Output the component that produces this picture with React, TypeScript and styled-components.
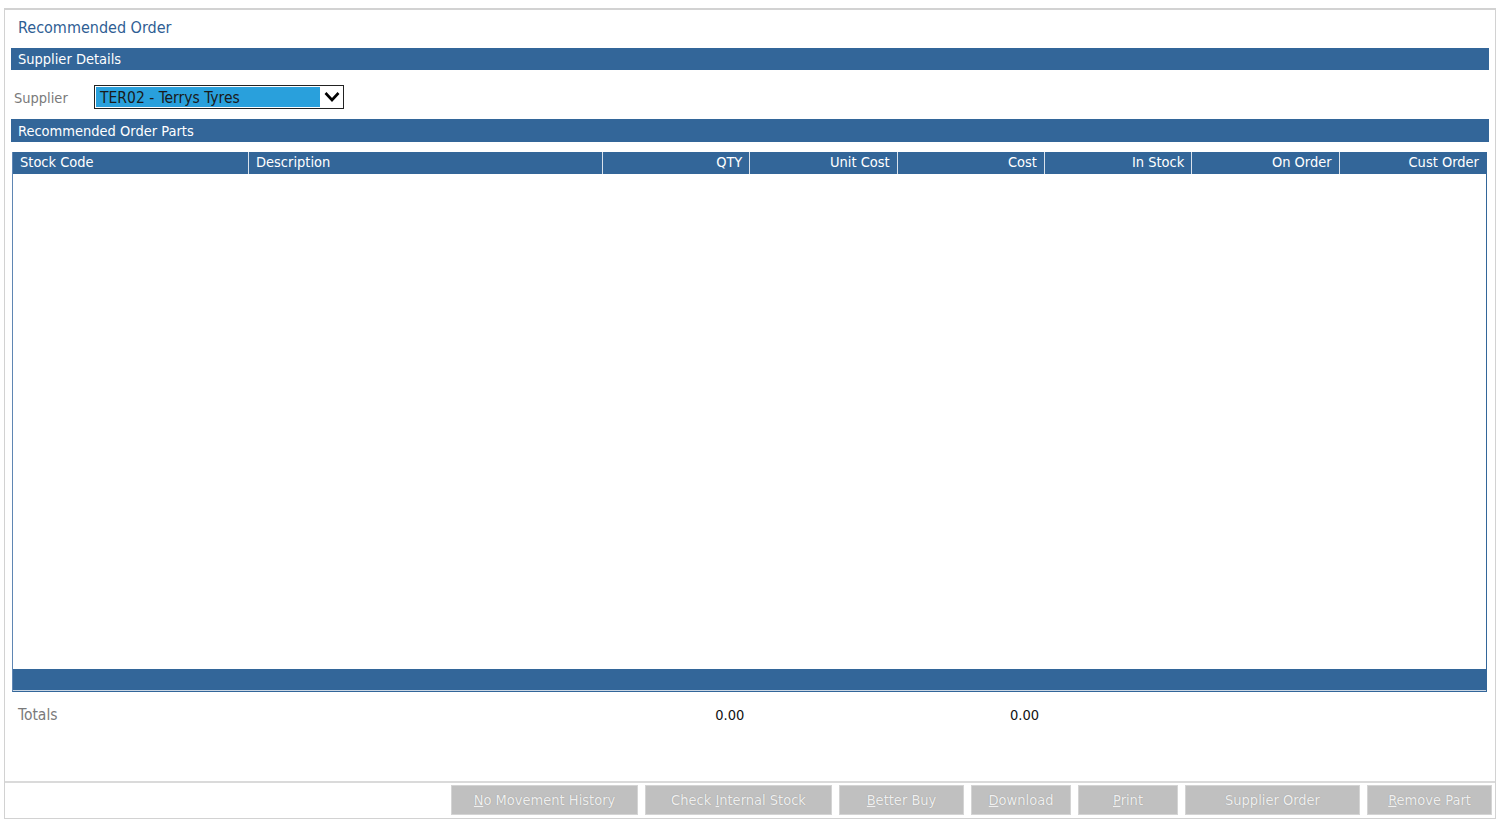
import styled, { createGlobalStyle } from 'styled-components';

const GlobalStyle = createGlobalStyle`
  body {
    margin: 0;
    background: #ffffff;
    font-family: "DejaVu Sans Condensed", "DejaVu Sans", sans-serif;
  }
`;

const BLUE = '#336699';

const Frame = styled.div`
  box-sizing: border-box;
  margin: 8px 0 0 4px;
  width: 1492px;
  height: 811px;
  border: 1px solid #d2d2d2;
  border-top-width: 2px;
  display: flex;
  flex-direction: column;
`;

const PageTitle = styled.h1`
  margin: 0;
  height: 38px;
  box-sizing: border-box;
  padding: 0 0 3px 13px;
  display: flex;
  align-items: center;
  font-size: 16px;
  font-weight: normal;
  color: #2f5e94;
`;

const Main = styled.div`
  padding: 0 6px;
  display: flex;
  flex-direction: column;
`;

const SectionBar = styled.div<{ $h?: number }>`
  height: ${(p) => p.$h ?? 22}px;
  background: ${BLUE};
  color: #ffffff;
  font-size: 14.5px;
  padding-left: 7px;
  display: flex;
  align-items: center;
`;

const FieldRow = styled.div`
  height: 49px;
  display: flex;
  align-items: center;
  padding-left: 3px;
  padding-top: 5px;
  box-sizing: border-box;
`;

const FieldLabel = styled.span`
  width: 80px;
  font-size: 14.5px;
  color: #7a7a7a;
  padding-top: 1px;
`;

const SelectBox = styled.div`
  box-sizing: border-box;
  width: 250px;
  height: 24px;
  border: 1px solid #222;
  display: flex;
  background: #fff;
`;

const SelectValue = styled.div`
  flex: 1;
  margin: 1px 0 1px 1px;
  background: #29a0dc;
  color: #1a1a1a;
  font-size: 15.5px;
  padding-left: 4px;
  display: flex;
  align-items: center;
  padding-top: 2px;
`;

const SelectArrow = styled.div`
  width: 23px;
  display: flex;
  align-items: center;
  justify-content: center;
`;

const Grid = styled.div`
  margin: 10px 1px 0 1px;
  width: 1475px;
  box-sizing: border-box;
  border: 1px solid ${BLUE};
  border-top: 0;
  border-left-color: #5f86b3;
  display: flex;
  flex-direction: column;
`;

const columns = '235px 354px repeat(6, 1fr)';

const HeaderRow = styled.div`
  display: grid;
  grid-template-columns: ${columns};
  height: 22px;
  background: ${BLUE};
`;

const HeaderCell = styled.div<{ $right?: boolean; $first?: boolean }>`
  color: #ffffff;
  font-size: 14.5px;
  display: flex;
  align-items: center;
  justify-content: ${(p) => (p.$right ? 'flex-end' : 'flex-start')};
  padding: 0 7px 2px 7px;
  border-left: ${(p) => (p.$first ? 'none' : '1px solid #d9e2ec')};
`;

const GridBody = styled.div`
  height: 495px;
  background: #ffffff;
`;

const GridFooter = styled.div`
  height: 21px;
  background: ${BLUE};
  border-bottom: 1px solid #c9d6e4;
`;

const TotalsRow = styled.div`
  display: grid;
  grid-template-columns: ${columns};
  width: 1473px;
  margin-left: 8px;
  height: 44px;
  box-sizing: border-box;
  padding-top: 2px;
  align-items: center;
  font-size: 14.5px;
`;

const TotalsLabel = styled.span`
  color: #7a7a7a;
  font-size: 15.5px;
  padding-left: 5px;
`;

const TotalsValue = styled.span`
  color: #111;
  text-align: right;
  padding-right: 5px;
`;

const Spacer = styled.div`
  flex: 1;
`;

const ButtonBar = styled.div`
  border-top: 2px solid #dadada;
  height: 37px;
  box-sizing: border-box;
  display: flex;
  justify-content: flex-end;
  align-items: flex-start;
  gap: 7px;
  padding: 2px 3px 0 0;
`;

const ActionButton = styled.button<{ $w: number }>`
  width: ${(p) => p.$w}px;
  height: 30px;
  background: #c0c0c0;
  border: 1px solid #d4d4d4;
  font-family: "DejaVu Sans Condensed", "DejaVu Sans", sans-serif;
  font-size: 14.5px;
  color: #f0f0f0;
  text-shadow: 0 0 1px #8e8e8e;
  padding: 0;
  cursor: default;

  u {
    text-decoration: underline;
  }
`;

const headers: { label: string; right?: boolean }[] = [
  { label: 'Stock Code' },
  { label: 'Description' },
  { label: 'QTY', right: true },
  { label: 'Unit Cost', right: true },
  { label: 'Cost', right: true },
  { label: 'In Stock', right: true },
  { label: 'On Order', right: true },
  { label: 'Cust Order', right: true },
];

export default function App() {
  return (
    <>
      <GlobalStyle />
      <Frame>
        <PageTitle>Recommended Order</PageTitle>
        <Main>
          <SectionBar>Supplier Details</SectionBar>
          <FieldRow>
            <FieldLabel>Supplier</FieldLabel>
            <SelectBox>
              <SelectValue>TER02 - Terrys Tyres</SelectValue>
              <SelectArrow>
                <svg width="18" height="12" viewBox="0 0 18 12">
                  <polyline points="2.5,2 9,9 15.5,2" fill="none" stroke="#000" strokeWidth="2.6" />
                </svg>
              </SelectArrow>
            </SelectBox>
          </FieldRow>
          <SectionBar $h={23}>Recommended Order Parts</SectionBar>
          <Grid>
            <HeaderRow>
              {headers.map((h, i) => (
                <HeaderCell key={h.label} $right={h.right} $first={i === 0}>
                  {h.label}
                </HeaderCell>
              ))}
            </HeaderRow>
            <GridBody />
            <GridFooter />
          </Grid>
        </Main>
        <TotalsRow>
          <TotalsLabel>Totals</TotalsLabel>
          <span />
          <TotalsValue>0.00</TotalsValue>
          <span />
          <TotalsValue>0.00</TotalsValue>
        </TotalsRow>
        <Spacer />
        <ButtonBar>
          <ActionButton $w={187}><u>N</u>o Movement History</ActionButton>
          <ActionButton $w={187}>Check <u>I</u>nternal Stock</ActionButton>
          <ActionButton $w={125}><u>B</u>etter Buy</ActionButton>
          <ActionButton $w={100}><u>D</u>ownload</ActionButton>
          <ActionButton $w={100}><u>P</u>rint</ActionButton>
          <ActionButton $w={175}>Supplier Order</ActionButton>
          <ActionButton $w={125}><u>R</u>emove Part</ActionButton>
        </ButtonBar>
      </Frame>
    </>
  );
}
